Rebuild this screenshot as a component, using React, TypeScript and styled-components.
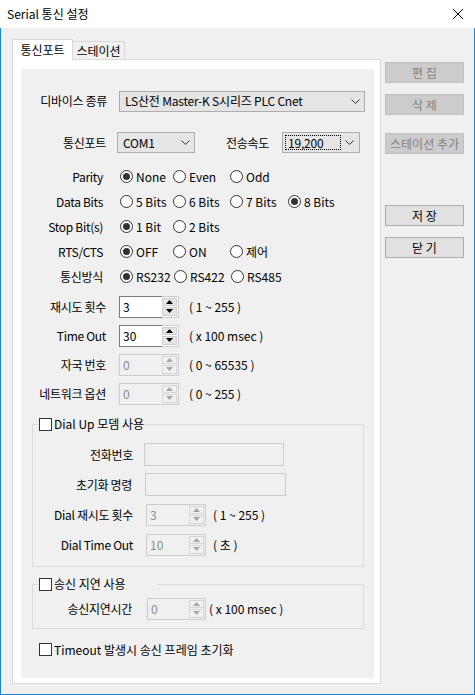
import React from 'react';
import styled, { createGlobalStyle } from 'styled-components';

const FONT = `"Noto Sans CJK KR", "Noto Sans", sans-serif`;

const GlobalStyle = createGlobalStyle`
  html, body {
    margin: 0;
    padding: 0;
  }
  body {
    font-family: ${FONT};
    font-size: 12px;
    color: #000;
    background: #fff;
    overflow: hidden;
  }
  * {
    box-sizing: border-box;
  }
`;

// Outer dialog window
const Window = styled.div`
  width: 475px;
  height: 695px;
  display: flex;
  flex-direction: column;
  background: #fff;
`;

// Title bar with caption and close button
const TitleBar = styled.div`
  height: 28px;
  display: flex;
  align-items: center;
  justify-content: space-between;
  padding-left: 7px;
  flex-shrink: 0;
`;

const Caption = styled.span`
  font-size: 12px;
  line-height: 16px;
  margin-top: -1px;
`;

const CloseButton = styled.div`
  width: 34px;
  height: 28px;
  display: flex;
  align-items: center;
  justify-content: center;
`;

// Client area with blue frame
const Body = styled.div`
  flex: 1;
  display: flex;
  gap: 4px;
  background: #f0f0f0;
  border: 1px solid #1883d7;
  border-top: none;
  padding: 11px 0 0 11px;
`;

// Tab control
const TabControl = styled.div`
  width: 369px;
  display: flex;
  flex-direction: column;
`;

const TabStrip = styled.div`
  height: 21px;
  display: flex;
  align-items: flex-start;
  margin-bottom: -1px;
  position: relative;
  z-index: 1;
`;

const Tab = styled.div<{ $active?: boolean; $w: number }>`
  width: ${(p) => p.$w}px;
  height: ${(p) => (p.$active ? 21 : 18)}px;
  margin-top: ${(p) => (p.$active ? 0 : 2)}px;
  background: ${(p) => (p.$active ? '#fff' : '#f0f0f0')};
  border: 1px solid #d9d9d9;
  border-bottom: none;
  ${(p) => (p.$active ? '' : 'border-left: none;')}
  display: flex;
  justify-content: center;
  align-items: ${(p) => (p.$active ? 'flex-start' : 'center')};
  padding-top: ${(p) => (p.$active ? 2 : 0)}px;
  font-size: 12px;
  line-height: 16px;
`;

const TabPanel = styled.div`
  height: 625px;
  border: 1px solid #d9d9d9;
  background: #fff;
  padding: 9px 6px 5px 8px;
  display: flex;
`;

const Panel = styled.div`
  flex: 1;
  background: #f0f0f0;
  display: flex;
  flex-direction: column;
`;

// One line of the form
const Row = styled.div<{ $mt?: number; $h: number; $pl?: number }>`
  display: flex;
  align-items: center;
  height: ${(p) => p.$h}px;
  margin-top: ${(p) => p.$mt ?? 0}px;
  padding-left: ${(p) => p.$pl ?? 0}px;
  flex-shrink: 0;
`;

const FieldLabel = styled.span<{ $w?: number; $ml?: number }>`
  ${(p) => (p.$w ? `width: ${p.$w}px; text-align: right;` : '')}
  margin-left: ${(p) => p.$ml ?? 0}px;
  flex-shrink: 0;
  white-space: nowrap;
  line-height: 16px;
  letter-spacing: -0.3px;
`;

const Hint = styled.span<{ $ml: number }>`
  margin-left: ${(p) => p.$ml}px;
  white-space: nowrap;
  line-height: 16px;
`;

// Drop-down list
const Combo = styled.div<{ $w: number; $ml: number; $focused?: boolean }>`
  width: ${(p) => p.$w}px;
  height: 21px;
  margin-left: ${(p) => p.$ml}px;
  background: #e5e5e5;
  border: 1px solid #adadad;
  display: flex;
  align-items: center;
  padding: 2px 0 2px ${(p) => (p.$focused ? 2 : 3)}px;
`;

const ComboText = styled.span<{ $focused?: boolean }>`
  flex: 1;
  height: 100%;
  display: flex;
  align-items: center;
  padding-left: ${(p) => (p.$focused ? 2 : 1)}px;
  border: 1px dotted ${(p) => (p.$focused ? '#000' : 'transparent')};
  white-space: nowrap;
  line-height: 16px;
  letter-spacing: -0.2px;
`;

const ComboArrow = styled.span`
  width: 18px;
  display: flex;
  justify-content: center;
  align-items: center;
`;

// Radio button
const RadioOption = styled.span<{ $w: number }>`
  width: ${(p) => p.$w}px;
  display: inline-flex;
  align-items: center;
  gap: 3px;
  white-space: nowrap;
  line-height: 16px;
`;

const RadioCircle = styled.span<{ $checked?: boolean }>`
  width: 13px;
  height: 13px;
  border-radius: 50%;
  border: 1px solid #333;
  background: #fff;
  display: flex;
  align-items: center;
  justify-content: center;
  flex-shrink: 0;

  &::after {
    content: '';
    width: 7px;
    height: 7px;
    border-radius: 50%;
    background: ${(p) => (p.$checked ? '#333' : 'transparent')};
  }
`;

const RadioGroup = styled.div<{ $ml: number }>`
  display: flex;
  margin-left: ${(p) => p.$ml}px;
`;

// Numeric up/down
const Spinner = styled.div<{ $w: number; $ml: number }>`
  width: ${(p) => p.$w}px;
  height: 22px;
  margin-left: ${(p) => p.$ml}px;
  display: flex;
  flex-shrink: 0;
`;

const SpinValue = styled.div<{ $disabled?: boolean }>`
  flex: 1;
  border: 1px solid ${(p) => (p.$disabled ? '#cccccc' : '#7a7a7a')};
  border-right: none;
  background: ${(p) => (p.$disabled ? '#f0f0f0' : '#fff')};
  color: ${(p) => (p.$disabled ? '#8d8d8d' : '#000')};
  display: flex;
  align-items: center;
  padding-left: 3px;
  line-height: 16px;
`;

const SpinButtons = styled.div<{ $disabled?: boolean }>`
  width: 17px;
  border: 1px solid #cccccc;
  border-left: none;
  background: ${(p) => (p.$disabled ? '#f0f0f0' : '#fff')};
  padding: 1px 1px 1px 0;
  display: flex;
  flex-direction: column;
  gap: 1px;
`;

const SpinButton = styled.div<{ $disabled?: boolean }>`
  flex: 1;
  background: ${(p) => (p.$disabled ? '#f0f0f0' : '#e5e5e5')};
  border: 1px solid ${(p) => (p.$disabled ? '#d6d6d6' : '#cfcfcf')};
  display: flex;
  align-items: center;
  justify-content: center;
`;

// Plain text box
const TextBox = styled.div<{ $w: number; $ml: number }>`
  width: ${(p) => p.$w}px;
  height: 23px;
  margin-left: ${(p) => p.$ml}px;
  border: 1px solid #cccccc;
  background: #f0f0f0;
  flex-shrink: 0;
`;

// Group box with checkbox caption
const Group = styled.fieldset<{ $mt: number }>`
  margin: ${(p) => p.$mt}px 10px 0 11px;
  padding: 0;
  border: 1px solid #dcdcdc;
  min-width: 0;
  display: flex;
  flex-direction: column;
`;

const GroupLegend = styled.legend<{ $w: number }>`
  width: ${(p) => p.$w}px;
  height: 16px;
  margin-left: 5px;
  padding: 0 0 0 1px;
  display: flex;
  align-items: center;
  gap: 2px;
  line-height: 16px;
  white-space: nowrap;
`;

const GroupBody = styled.div<{ $pt: number; $pb: number }>`
  display: flex;
  flex-direction: column;
  gap: 7px;
  padding: ${(p) => p.$pt}px 0 ${(p) => p.$pb}px 0;
`;

const CheckBox = styled.span`
  width: 13px;
  height: 13px;
  border: 1px solid #333;
  background: #fff;
  flex-shrink: 0;
`;

const CheckLabel = styled.span`
  display: inline-flex;
  align-items: center;
  gap: 2px;
  line-height: 16px;
  white-space: nowrap;
`;

// Right-hand button column
const SideColumn = styled.div`
  display: flex;
  flex-direction: column;
  width: 79px;
`;

const SideButton = styled.div<{ $mt: number; $disabled?: boolean }>`
  height: 21px;
  margin-top: ${(p) => p.$mt}px;
  background: ${(p) => (p.$disabled ? '#cccccc' : '#e1e1e1')};
  border: 1px solid ${(p) => (p.$disabled ? '#bfbfbf' : '#adadad')};
  color: ${(p) => (p.$disabled ? '#838383' : '#000')};
  display: flex;
  align-items: center;
  justify-content: center;
  line-height: 16px;
  white-space: nowrap;
`;

const Chevron = () => (
  <svg width="9" height="5" viewBox="0 0 9 5">
    <path d="M0.5 0.5 L4.5 4.5 L8.5 0.5" fill="none" stroke="#333" strokeWidth="1" />
  </svg>
);

const Arrow = ({ up, disabled }: { up?: boolean; disabled?: boolean }) => (
  <svg width="7" height="4" viewBox="0 0 7 4">
    <path d={up ? 'M0 4 L3.5 0 L7 4 Z' : 'M0 0 L3.5 4 L7 0 Z'} fill={disabled ? '#a6a6a6' : '#000'} />
  </svg>
);

const NumberBox = ({ value, disabled, w = 60, ml }: { value: string; disabled?: boolean; w?: number; ml: number }) => (
  <Spinner $w={w} $ml={ml}>
    <SpinValue $disabled={disabled}>{value}</SpinValue>
    <SpinButtons $disabled={disabled}>
      <SpinButton $disabled={disabled}>
        <Arrow up disabled={disabled} />
      </SpinButton>
      <SpinButton $disabled={disabled}>
        <Arrow disabled={disabled} />
      </SpinButton>
    </SpinButtons>
  </Spinner>
);

const radioRows = [
  { label: 'Parity', options: ['None', 'Even', 'Odd'], checked: 0, widths: [53, 57, 58] },
  { label: 'Data Bits', options: ['5 Bits', '6 Bits', '7 Bits', '8 Bits'], checked: 3, widths: [53, 57, 58, 58] },
  { label: 'Stop Bit(s)', options: ['1 Bit', '2 Bits'], checked: 0, widths: [53, 57] },
  { label: 'RTS/CTS', options: ['OFF', 'ON', '제어'], checked: 0, widths: [53, 57, 58] },
  { label: '통신방식', options: ['RS232', 'RS422', 'RS485'], checked: 0, widths: [54, 57, 58] },
];

const spinRows = [
  { label: '재시도 횟수', value: '3', hint: '( 1 ~ 255 )' },
  { label: 'Time Out', value: '30', hint: '( x 100 msec )' },
  { label: '자국 번호', value: '0', hint: '( 0 ~ 65535 )', disabled: true },
  { label: '네트워크 옵션', value: '0', hint: '( 0 ~ 255 )', disabled: true },
];

const sideButtons = [
  { text: '편 집', mt: 23, disabled: true },
  { text: '삭 제', mt: 11, disabled: true },
  { text: '스테이션 추가', mt: 18, disabled: true },
  { text: '저 장', mt: 51 },
  { text: '닫 기', mt: 11 },
];

export default function App() {
  return (
    <>
      <GlobalStyle />
      <Window>
        <TitleBar>
          <Caption>Serial 통신 설정</Caption>
          <CloseButton>
            <svg width="10" height="10" viewBox="0 0 10 10">
              <path d="M0 0 L10 10 M10 0 L0 10" stroke="#000" strokeWidth="1" />
            </svg>
          </CloseButton>
        </TitleBar>

        <Body>
          <TabControl>
            <TabStrip>
              <Tab $active $w={61}>통신포트</Tab>
              <Tab $w={52}>스테이션</Tab>
            </TabStrip>
            <TabPanel>
              <Panel>
                <Row $mt={21} $h={22}>
                  <FieldLabel $w={86}>디바이스 종류</FieldLabel>
                  <Combo $w={246} $ml={12}>
                    <ComboText>LS산전 Master-K S시리즈 PLC Cnet</ComboText>
                    <ComboArrow>
                      <Chevron />
                    </ComboArrow>
                  </Combo>
                </Row>

                <Row $mt={20} $h={21}>
                  <FieldLabel $w={85}>통신포트</FieldLabel>
                  <Combo $w={78} $ml={11}>
                    <ComboText>COM1</ComboText>
                    <ComboArrow>
                      <Chevron />
                    </ComboArrow>
                  </Combo>
                  <FieldLabel $ml={31}>전송속도</FieldLabel>
                  <Combo $w={78} $ml={13} $focused>
                    <ComboText $focused>19,200</ComboText>
                    <ComboArrow>
                      <Chevron />
                    </ComboArrow>
                  </Combo>
                </Row>

                {radioRows.map((row, i) => (
                  <Row key={row.label} $mt={i === 0 ? 11 : 0} $h={25}>
                    <FieldLabel $w={82}>{row.label}</FieldLabel>
                    <RadioGroup $ml={17}>
                      {row.options.map((opt, j) => (
                        <RadioOption key={opt} $w={row.widths[j]}>
                          <RadioCircle $checked={j === row.checked} />
                          {opt}
                        </RadioOption>
                      ))}
                    </RadioGroup>
                  </Row>
                ))}

                {spinRows.map((row) => (
                  <Row key={row.label} $mt={6} $h={23}>
                    <FieldLabel $w={85}>{row.label}</FieldLabel>
                    <NumberBox value={row.value} disabled={row.disabled} ml={13} />
                    <Hint $ml={10}>{row.hint}</Hint>
                  </Row>
                ))}

                <Group $mt={11}>
                  <GroupLegend $w={105}>
                    <CheckBox />
                    Dial Up 모뎀 사용
                  </GroupLegend>
                  <GroupBody $pt={11} $pb={10}>
                    <Row $h={23}>
                      <FieldLabel $w={100}>전화번호</FieldLabel>
                      <TextBox $w={140} $ml={11} />
                    </Row>
                    <Row $h={23}>
                      <FieldLabel $w={99}>초기화 명령</FieldLabel>
                      <TextBox $w={141} $ml={13} />
                    </Row>
                    <Row $h={23}>
                      <FieldLabel $w={100}>Dial 재시도 횟수</FieldLabel>
                      <NumberBox value="3" disabled ml={13} />
                      <Hint $ml={7}>( 1 ~ 255 )</Hint>
                    </Row>
                    <Row $h={23}>
                      <FieldLabel $w={100}>Dial Time Out</FieldLabel>
                      <NumberBox value="10" disabled ml={13} />
                      <Hint $ml={7}>( 초 )</Hint>
                    </Row>
                  </GroupBody>
                </Group>

                <Group $mt={9}>
                  <GroupLegend $w={120}>
                    <CheckBox />
                    송신 지연 사용
                  </GroupLegend>
                  <GroupBody $pt={5} $pb={8}>
                    <Row $h={23}>
                      <FieldLabel $w={99}>송신지연시간</FieldLabel>
                      <NumberBox value="0" disabled w={59} ml={15} />
                      <Hint $ml={3}>( x 100 msec )</Hint>
                    </Row>
                  </GroupBody>
                </Group>

                <Row $mt={14} $h={13} $pl={18}>
                  <CheckLabel>
                    <CheckBox />
                    Timeout 발생시 송신 프레임 초기화
                  </CheckLabel>
                </Row>
              </Panel>
            </TabPanel>
          </TabControl>

          <SideColumn>
            {sideButtons.map((b) => (
              <SideButton key={b.text} $mt={b.mt} $disabled={b.disabled}>
                {b.text}
              </SideButton>
            ))}
          </SideColumn>
        </Body>
      </Window>
    </>
  );
}
